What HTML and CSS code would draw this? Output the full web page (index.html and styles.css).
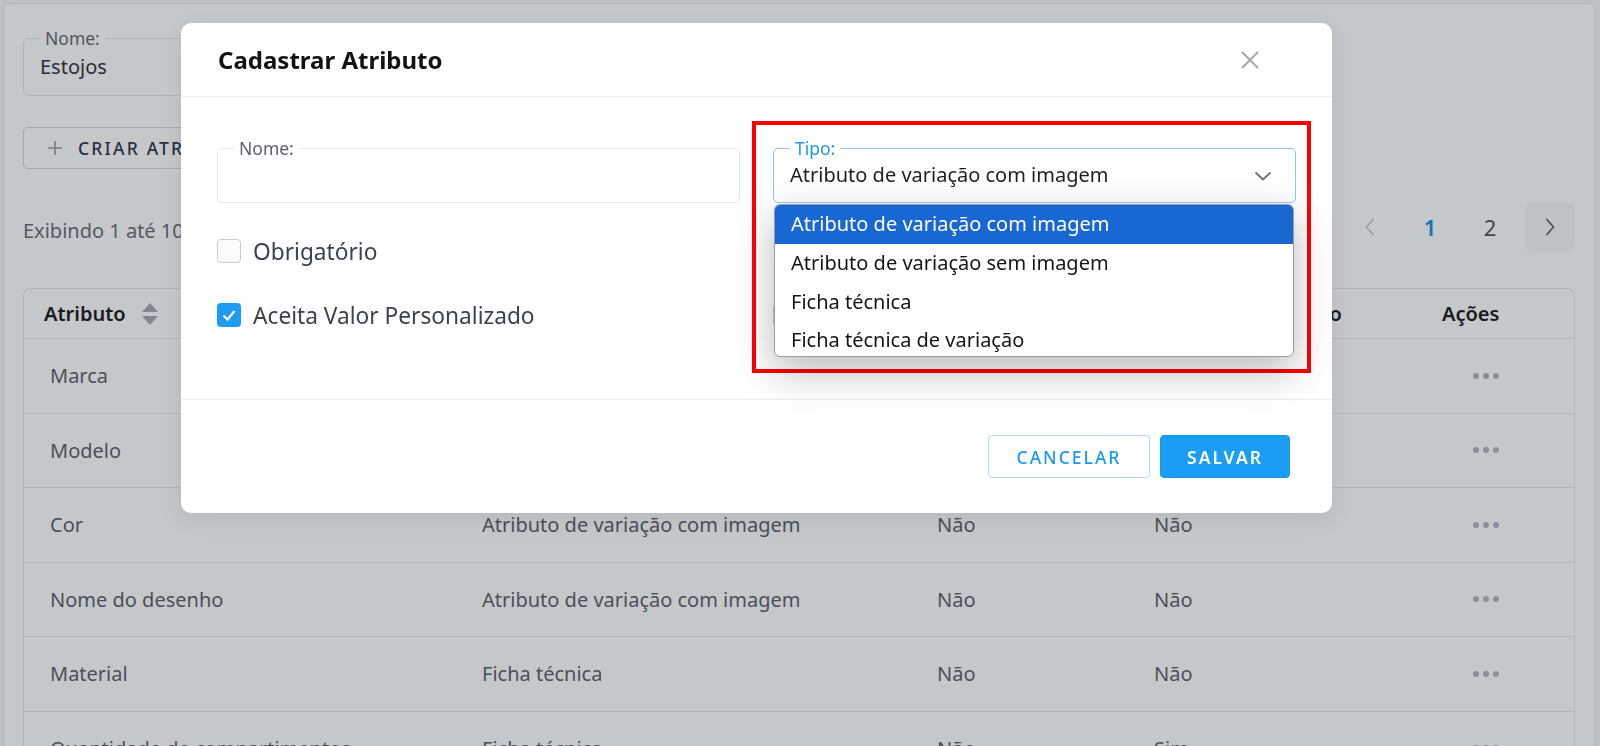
FILE: index.html
```html
<!DOCTYPE html>
<html lang="pt-BR">
<head>
<meta charset="utf-8">
<title>Atributos</title>
<link rel="stylesheet" href="styles.css">
</head>
<body>
<div class="card">
  <div class="filters">
    <fieldset class="field field-page">
      <legend>Nome:</legend>
      <div class="value">Estojos</div>
    </fieldset>
  </div>
  <div class="actions">
    <button class="btn-create" type="button">
      <svg class="plus" width="16" height="16" viewBox="0 0 16 16"><path d="M8 1v14M1 8h14" stroke="#9aa0aa" stroke-width="1.6" fill="none"/></svg>
      <span>CRIAR ATRIBUTO</span>
    </button>
  </div>
  <div class="list-bar">
    <span class="count">Exibindo 1 até 10 de 12 registros</span>
    <nav class="pager">
      <span class="page-item"><svg width="10" height="20" viewBox="0 0 10 20"><polyline points="8.5,2 1.5,10 8.5,18" fill="none" stroke="#c3c8ce" stroke-width="1.5"/></svg></span>
      <span class="page-item active">1</span>
      <span class="page-item">2</span>
      <span class="page-item next"><svg width="10" height="20" viewBox="0 0 10 20"><polyline points="1.5,2 8.5,10 1.5,18" fill="none" stroke="#5a6070" stroke-width="1.6"/></svg></span>
    </nav>
  </div>
  <div class="table">
    <div class="tr th">
      <div class="cell">Atributo <svg class="sort" width="16" height="22" viewBox="0 0 16 22"><path d="M0 9L8 0L16 9Z M0 13L8 22L16 13Z" fill="#a4aab3"/></svg></div>
      <div class="cell">Tipo</div>
      <div class="cell">Obrigatório</div>
      <div class="cell">Valor personalizado</div>
      <div class="cell">Ações</div>
    </div>
    <div class="tr">
      <div class="cell">Marca</div><div class="cell">Ficha técnica</div><div class="cell">Não</div><div class="cell">Sim</div>
      <div class="cell dots-cell"><svg width="26" height="6" viewBox="0 0 26 6"><circle cx="3" cy="3" r="3"/><circle cx="13" cy="3" r="3"/><circle cx="23" cy="3" r="3"/></svg></div>
    </div>
    <div class="tr">
      <div class="cell">Modelo</div><div class="cell">Ficha técnica</div><div class="cell">Não</div><div class="cell">Sim</div>
      <div class="cell dots-cell"><svg width="26" height="6" viewBox="0 0 26 6"><circle cx="3" cy="3" r="3"/><circle cx="13" cy="3" r="3"/><circle cx="23" cy="3" r="3"/></svg></div>
    </div>
    <div class="tr">
      <div class="cell">Cor</div><div class="cell">Atributo de variação com imagem</div><div class="cell">Não</div><div class="cell">Não</div>
      <div class="cell dots-cell"><svg width="26" height="6" viewBox="0 0 26 6"><circle cx="3" cy="3" r="3"/><circle cx="13" cy="3" r="3"/><circle cx="23" cy="3" r="3"/></svg></div>
    </div>
    <div class="tr">
      <div class="cell">Nome do desenho</div><div class="cell">Atributo de variação com imagem</div><div class="cell">Não</div><div class="cell">Não</div>
      <div class="cell dots-cell"><svg width="26" height="6" viewBox="0 0 26 6"><circle cx="3" cy="3" r="3"/><circle cx="13" cy="3" r="3"/><circle cx="23" cy="3" r="3"/></svg></div>
    </div>
    <div class="tr">
      <div class="cell">Material</div><div class="cell">Ficha técnica</div><div class="cell">Não</div><div class="cell">Não</div>
      <div class="cell dots-cell"><svg width="26" height="6" viewBox="0 0 26 6"><circle cx="3" cy="3" r="3"/><circle cx="13" cy="3" r="3"/><circle cx="23" cy="3" r="3"/></svg></div>
    </div>
    <div class="tr">
      <div class="cell">Quantidade de compartimentos</div><div class="cell">Ficha técnica</div><div class="cell">Não</div><div class="cell">Sim</div>
      <div class="cell dots-cell"><svg width="26" height="6" viewBox="0 0 26 6"><circle cx="3" cy="3" r="3"/><circle cx="13" cy="3" r="3"/><circle cx="23" cy="3" r="3"/></svg></div>
    </div>
  </div>
</div>

<div class="overlay"></div>

<div class="modal">
  <div class="modal-header">
    <h2 class="modal-title">Cadastrar Atributo</h2>
    <button class="close" type="button" aria-label="Fechar">
      <svg width="20" height="20" viewBox="0 0 20 20"><path d="M2 2L18 18M18 2L2 18" stroke="#a3a8b0" stroke-width="2" fill="none"/></svg>
    </button>
  </div>
  <div class="modal-body">
    <fieldset class="field">
      <legend>Nome:</legend>
      <div class="value"></div>
    </fieldset>
    <fieldset class="field focused">
      <legend>Tipo:</legend>
      <div class="value select-value">
        <span>Atributo de variação com imagem</span>
        <svg class="chev" width="18" height="10" viewBox="0 0 18 10"><polyline points="1.5,1.5 9,8.5 16.5,1.5" fill="none" stroke="#6b717c" stroke-width="1.8"/></svg>
      </div>
    </fieldset>
    <label class="check-row r2">
      <span class="box"></span>
      <span class="check-label">Obrigatório</span>
    </label>
    <div class="spacer r2"></div>
    <label class="check-row r3">
      <span class="box checked"><svg width="24" height="24" viewBox="0 0 24 24"><polyline points="6.5,12.5 10.5,16.5 17.5,8" fill="none" stroke="#fff" stroke-width="2.2"/></svg></span>
      <span class="check-label">Aceita Valor Personalizado</span>
    </label>
    <label class="check-row r3" aria-label="Filtrável">
      <span class="box"></span>
    </label>
  </div>
  <div class="modal-footer">
    <button class="btn btn-cancel" type="button">CANCELAR</button>
    <button class="btn btn-save" type="button">SALVAR</button>
  </div>

  <div class="highlight-box"></div>
  <ul class="dropdown">
    <li class="opt selected">Atributo de variação com imagem</li>
    <li class="opt">Atributo de variação sem imagem</li>
    <li class="opt">Ficha técnica</li>
    <li class="opt">Ficha técnica de variação</li>
  </ul>
</div>
</body>
</html>
```

FILE: styles.css
```css
html, body {
  margin: 0;
  height: 746px;
  overflow: hidden;
}
body {
  font-family: "Noto Sans", "Open Sans", sans-serif;
  background: #f3f5f7;
  color: #333;
}
button { font-family: inherit; }

/* ---------- underlying page ---------- */
.card {
  width: 1592px;
  box-sizing: border-box;
  margin: 3px 0 0 3px;
  padding: 23px 19px 0 19px;
  background: #fff;
  border: 1px solid #e4e6ea;
  border-radius: 7px;
  height: 780px;
}

.field {
  margin: 0;
  padding: 0 16px;
  border: 1px solid #e3e6ea;
  border-radius: 5px;
  min-width: 0;
}
.field legend {
  padding: 0 5px;
  font-size: 17.5px;
  line-height: 22px;
  color: #666b73;
}
.field .value {
  height: 32px;
  line-height: 32px;
  padding-bottom: 11px;
  font-size: 20px;
  color: #1d1f23;
}
.field-page {
  width: 420px;
  box-sizing: border-box;
}
.field-page .value {
  height: 36px;
  line-height: 36px;
  padding-bottom: 10px;
  color: #343840;
}

.actions { margin-top: 31px; }
.btn-create {
  height: 42px;
  display: flex;
  align-items: center;
  gap: 15px;
  padding: 0 24px 0 23px;
  background: #fff;
  border: 1px solid #d3d7dc;
  border-radius: 5px;
  font-size: 17.5px;
  letter-spacing: 2.2px;
  color: #333a4d;
  font-weight: 500;
}

.list-bar {
  margin-top: 33px;
  height: 50px;
  display: flex;
  align-items: center;
  justify-content: space-between;
}
.count {
  font-size: 20px;
  color: #6a707a;
  padding-top: 6px;
}
.pager {
  display: flex;
  gap: 10px;
}
.page-item {
  width: 50px;
  height: 50px;
  display: flex;
  align-items: center;
  justify-content: center;
  font-size: 22px;
  color: #525866;
  border-radius: 8px;
}
.page-item.active {
  color: #1f8fdf;
  font-weight: 600;
}
.page-item.next { background: #f6f7f8; }

.table {
  margin-top: 36px;
  border: 1px solid #e6e8eb;
  border-bottom: none;
  border-radius: 8px 8px 0 0;
}
.tr {
  display: grid;
  grid-template-columns: 432px 455px 217px 293px 1fr;
  height: 73.5px;
  border-bottom: 1px solid #e6e8eb;
  align-items: center;
}
.tr.th { height: 49px; }
.cell {
  padding-left: 26px;
  font-size: 20px;
  color: #5f646d;
  white-space: nowrap;
}
.th .cell {
  padding-left: 21px;
  color: #1f1f22;
  font-weight: 600;
  display: flex;
  align-items: center;
}
.th .cell:first-child { padding-left: 20px; }
.sort { margin-left: 16px; }
.dots-cell {
  padding-left: 52px;
  display: flex;
  align-items: center;
}
.dots-cell svg { fill: #b1b7c0; }

/* ---------- overlay + modal ---------- */
.overlay {
  position: fixed;
  inset: 0;
  background: rgba(3, 16, 29, 0.23);
}

.modal {
  position: fixed;
  left: 181px;
  top: 23px;
  width: 1151px;
  background: #fff;
  border-radius: 10px;
  box-shadow: 0 6px 24px rgba(0, 0, 0, 0.08);
}
.modal-header {
  height: 73px;
  display: flex;
  align-items: center;
  justify-content: space-between;
  padding-left: 37px;
  border-bottom: 1px solid #eceef1;
}
.modal-title {
  margin: 0;
  font-size: 24px;
  font-weight: 700;
  color: #121317;
}
.close {
  width: 44px;
  height: 44px;
  margin-right: 60px;
  padding: 0;
  border: none;
  background: none;
  display: flex;
  align-items: center;
  justify-content: center;
}

.modal-body {
  display: grid;
  grid-template-columns: 1fr 1fr;
  grid-template-rows: auto 68px 64px;
  column-gap: 33px;
  padding: 40px 36px 64px;
  border-bottom: 1px solid #eceef1;
}
.modal-body .field legend { color: #5c616a; }
.field.focused { border-color: #8fc6f4; }
.field.focused legend { color: #2196f3; }
.select-value {
  display: flex;
  align-items: center;
  justify-content: space-between;
  padding-right: 7px;
}
.chev { margin-top: 2px; }

.check-row {
  align-self: end;
  height: 40px;
  display: flex;
  align-items: center;
  gap: 12px;
}
.box {
  width: 24px;
  height: 24px;
  box-sizing: border-box;
  border: 1px solid #c9cdd3;
  border-radius: 4px;
  background: #fafbfc;
  display: flex;
}
.box.checked {
  border: none;
  background: #1e9bf2;
}
.check-label {
  font-size: 22.7px;
  color: #3b4250;
}

.modal-footer {
  height: 113px;
  display: flex;
  align-items: center;
  justify-content: flex-end;
  gap: 10px;
  padding-right: 42px;
}
.btn {
  height: 43px;
  border-radius: 4px;
  font-size: 17.5px;
  letter-spacing: 2px;
  cursor: pointer;
}
.btn-cancel {
  width: 162px;
  background: #fff;
  border: 1px solid #b0daf8;
  color: #1a9af2;
  font-weight: 500;
}
.btn-save {
  width: 130px;
  background: #199ef4;
  border: 1px solid #1896ea;
  color: #fff;
  font-weight: 600;
}

/* red annotation box */
.highlight-box {
  position: absolute;
  left: 571px;
  top: 98px;
  width: 559px;
  height: 252px;
  box-sizing: border-box;
  border: 4px solid #ff0000;
}

/* native-like dropdown popup */
.dropdown {
  position: absolute;
  left: 593px;
  top: 181px;
  width: 520px;
  height: 153px;
  margin: 0;
  padding: 0;
  list-style: none;
  box-sizing: border-box;
  background: #fff;
  border: 1px solid #9c9c9c;
  border-radius: 6px;
  overflow: hidden;
  box-shadow: 0 14px 40px rgba(0, 0, 0, 0.28);
}
.opt {
  height: 38.8px;
  line-height: 38px;
  padding-left: 16px;
  font-size: 20px;
  color: #151515;
}
.opt.selected {
  background: #1967d2;
  color: #fff;
}
```
